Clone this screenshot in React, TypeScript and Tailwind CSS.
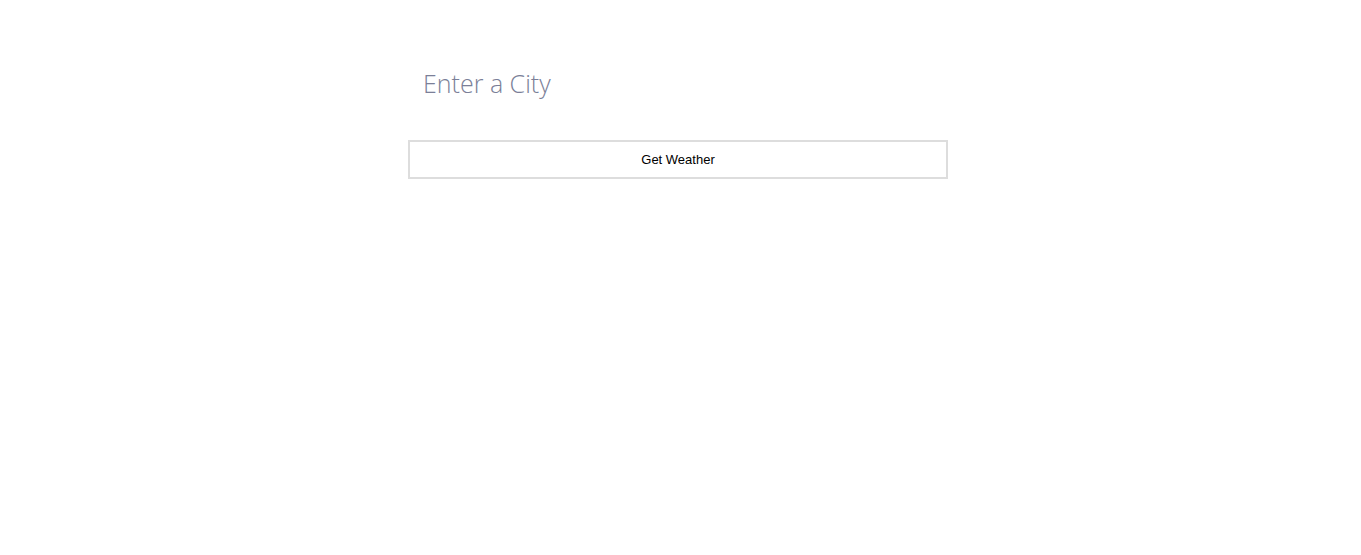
export default function App() {
  return (
    <div className="min-h-screen bg-white flex justify-center pr-[5px]">
      <div className="w-[540px] pt-[53px]">
        {/* City input */}
        <input
          type="text"
          placeholder="Enter a City"
          className="w-full h-[60px] px-[15px] text-[25px] font-light outline-none placeholder:text-[#7b7f98] text-[#555]"
          style={{ fontFamily: '"Open Sans", sans-serif' }}
        />

        <button
          type="button"
          className="mt-[27px] w-full h-[39px] pt-px border-2 border-[#dddddd] bg-white text-[13px] text-black"
          style={{ fontFamily: '"Liberation Sans", Arial, sans-serif' }}
        >
          Get Weather
        </button>
      </div>
    </div>
  );
}
